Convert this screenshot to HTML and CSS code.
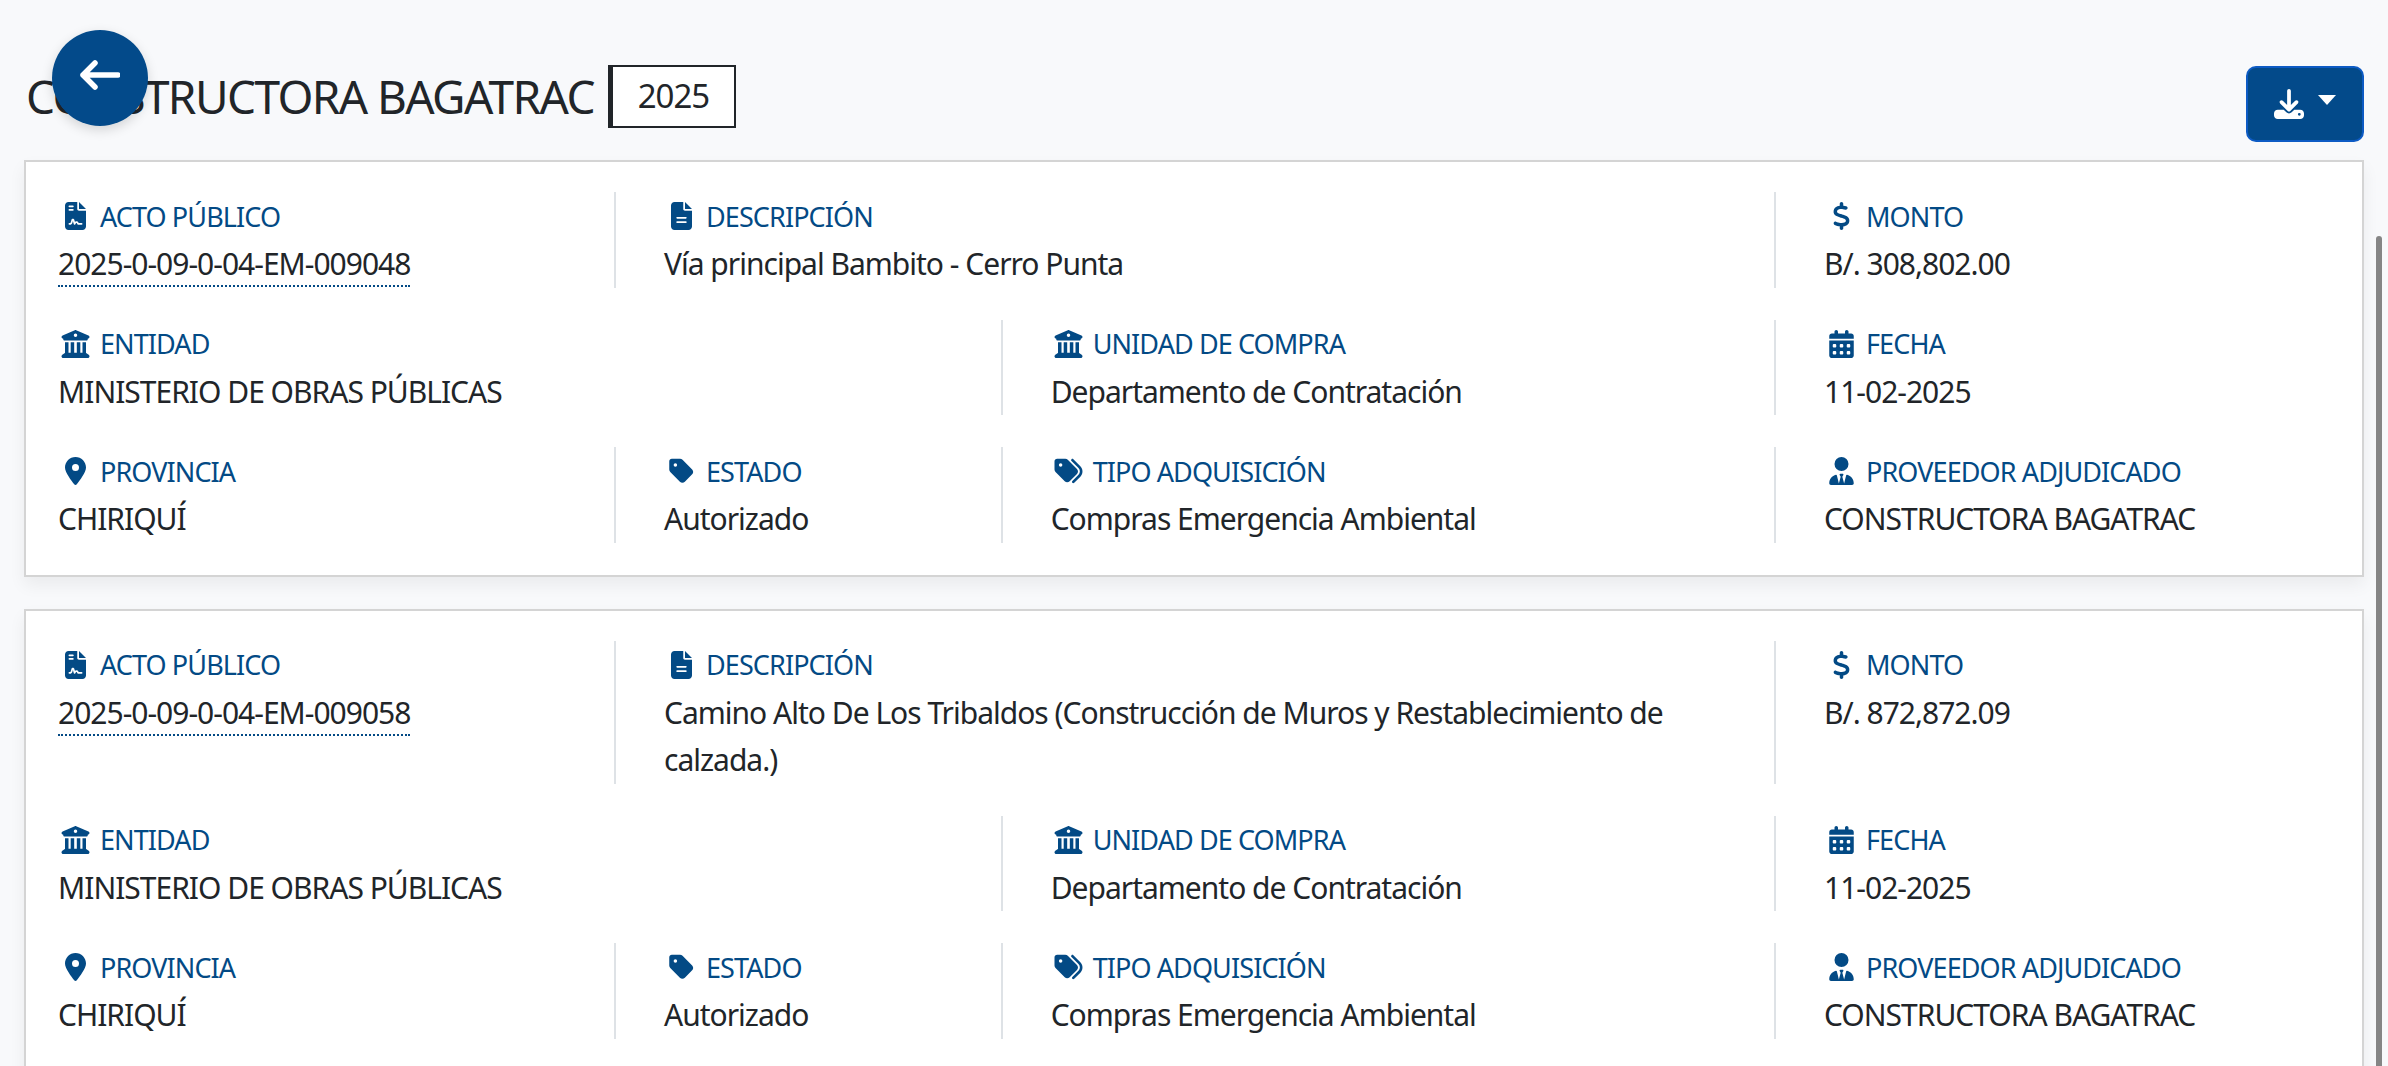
FILE: index.html
```html
<!DOCTYPE html>
<html lang="en">
<head>
    <meta charset="UTF-8">
    <meta name="viewport" content="width=device-width, initial-scale=1.0">
    <title>Constructora Bagatrac</title>
    <link rel="stylesheet" href="styles.css">
</head>
<body>
    <!-- Icon sprite -->
    <svg class="sprite" xmlns="http://www.w3.org/2000/svg">
        <symbol id="i-contract" viewBox="0 0 384 512"><path d="M64 0C28.7 0 0 28.7 0 64V448c0 35.3 28.7 64 64 64H320c35.3 0 64-28.7 64-64V160H256c-17.7 0-32-14.3-32-32V0H64zM256 0V128H384L256 0zM80 64h64c8.8 0 16 7.2 16 16s-7.2 16-16 16H80c-8.8 0-16-7.2-16-16s7.2-16 16-16zm0 64h64c8.8 0 16 7.2 16 16s-7.2 16-16 16H80c-8.8 0-16-7.2-16-16s7.2-16 16-16zm54.2 253.8c-6.1 20.3-24.8 34.2-46 34.2H80c-8.8 0-16-7.2-16-16s7.2-16 16-16h8.2c7.1 0 13.3-4.6 15.3-11.4l14.9-49.5c3.4-11.3 13.8-19.1 25.6-19.1s22.2 7.7 25.6 19.1l11.6 38.6c7.4-6.2 16.8-9.7 26.8-9.7c15.9 0 30.4 9 37.5 23.2l4.4 8.8H304c8.8 0 16 7.2 16 16s-7.2 16-16 16H240c-6.1 0-11.6-3.4-14.3-8.8l-8.8-17.7c-1.7-3.4-5.1-5.5-8.8-5.5s-7.2 2.1-8.8 5.5l-8.8 17.7c-2.9 5.9-9.2 9.4-15.7 8.8s-12.1-5.1-13.9-11.3L144 349l-9.8 32.8z"/></symbol>
        <symbol id="i-file" viewBox="0 0 384 512"><path d="M64 0C28.7 0 0 28.7 0 64V448c0 35.3 28.7 64 64 64H320c35.3 0 64-28.7 64-64V160H256c-17.7 0-32-14.3-32-32V0H64zM256 0V128H384L256 0zM112 272H272c8.8 0 16 7.2 16 16s-7.2 16-16 16H112c-8.8 0-16-7.2-16-16s7.2-16 16-16zm0 80H272c8.8 0 16 7.2 16 16s-7.2 16-16 16H112c-8.8 0-16-7.2-16-16s7.2-16 16-16z"/></symbol>
        <symbol id="i-dollar" viewBox="0 0 320 512"><path d="M160 0c17.7 0 32 14.3 32 32V67.7c1.6 .2 3.1 .4 4.7 .7c.4 .1 .7 .1 1.1 .2l48 8.8c17.4 3.2 28.9 19.9 25.7 37.2s-19.9 28.9-37.2 25.7l-47.5-8.7c-31.3-4.6-58.9-1.5-78.3 6.2s-27.2 18.3-29 28.1c-2 10.7-.5 16.7 1.2 20.4c1.8 3.9 5.5 8.3 12.8 13.2c16.3 10.7 41.3 17.7 73.7 26.3l2.9 .8c28.6 7.6 63.6 16.8 89.6 33.8c14.2 9.3 27.6 21.9 35.9 39.5c8.5 17.9 10.3 37.9 6.4 59.2c-6.9 38-33.1 63.4-65.6 76.7c-13.7 5.6-28.6 9.2-44.4 11V480c0 17.7-14.3 32-32 32s-32-14.3-32-32V445.1c-.4-.1-.9-.1-1.3-.2l-.2 0 0 0c-24.4-3.8-64.5-14.3-91.5-26.3c-16.1-7.2-23.4-26.1-16.2-42.2s26.1-23.4 42.2-16.2c20.9 9.3 55.3 18.5 75.2 21.6c31.9 4.7 58.2 2 76-5.3c16.9-6.9 24.6-16.9 26.8-28.9c1.9-10.6 .4-16.7-1.3-20.4c-1.9-4-5.6-8.4-13-13.3c-16.4-10.7-41.5-17.7-74-26.3l-2.8-.7 0 0C119.4 279.3 84.4 270 58.4 253c-14.2-9.3-27.5-22-35.8-39.6c-8.4-17.9-10.1-37.9-6.1-59.2C23.7 116 52.3 91.2 84.8 78.3c13.3-5.3 27.9-8.9 43.2-11V32c0-17.7 14.3-32 32-32z"/></symbol>
        <symbol id="i-bank" viewBox="0 0 512 512"><path d="M243.4 2.6l-224 96c-14 6-21.8 21-18.7 35.8S16.8 160 32 160v8c0 13.3 10.7 24 24 24H456c13.3 0 24-10.7 24-24v-8c15.2 0 28.3-10.7 31.3-25.6s-4.8-29.9-18.7-35.8l-224-96c-8-3.4-17.2-3.4-25.2 0zM128 224H64V420.3c-.6 .3-1.2 .7-1.8 1.1l-48 32c-11.7 7.8-17 22.4-12.9 35.9S17.9 512 32 512H480c14.1 0 26.5-9.2 30.6-22.7s-1.1-28.1-12.9-35.9l-48-32c-.6-.4-1.2-.7-1.8-1.1V224H384V416H344V224H280V416H232V224H168V416H128V224zM256 64a32 32 0 1 1 0 64 32 32 0 1 1 0-64z"/></symbol>
        <symbol id="i-calendar" viewBox="0 0 448 512"><path d="M128 0c17.7 0 32 14.3 32 32V64H288V32c0-17.7 14.3-32 32-32s32 14.3 32 32V64h48c26.5 0 48 21.5 48 48v48H0V112C0 85.5 21.5 64 48 64H96V32c0-17.7 14.3-32 32-32zM0 192H448V464c0 26.5-21.5 48-48 48H48c-26.5 0-48-21.5-48-48V192zm64 80v32c0 8.8 7.2 16 16 16h32c8.8 0 16-7.2 16-16V272c0-8.8-7.2-16-16-16H80c-8.8 0-16 7.2-16 16zm128 0v32c0 8.8 7.2 16 16 16h32c8.8 0 16-7.2 16-16V272c0-8.8-7.2-16-16-16H208c-8.8 0-16 7.2-16 16zm144-16c-8.8 0-16 7.2-16 16v32c0 8.8 7.2 16 16 16h32c8.8 0 16-7.2 16-16V272c0-8.8-7.2-16-16-16H336zM64 400v32c0 8.8 7.2 16 16 16h32c8.8 0 16-7.2 16-16V400c0-8.8-7.2-16-16-16H80c-8.8 0-16 7.2-16 16zm144-16c-8.8 0-16 7.2-16 16v32c0 8.8 7.2 16 16 16h32c8.8 0 16-7.2 16-16V400c0-8.8-7.2-16-16-16H208zm112 16v32c0 8.8 7.2 16 16 16h32c8.8 0 16-7.2 16-16V400c0-8.8-7.2-16-16-16H336c-8.8 0-16 7.2-16 16z"/></symbol>
        <symbol id="i-pin" viewBox="0 0 384 512"><path d="M215.7 499.2C267 435 384 279.4 384 192C384 86 298 0 192 0S0 86 0 192c0 87.4 117 243 168.3 307.2c12.3 15.3 35.1 15.3 47.4 0zM192 128a64 64 0 1 1 0 128 64 64 0 1 1 0-128z"/></symbol>
        <symbol id="i-tag" viewBox="0 0 448 512"><path d="M0 80V229.5c0 17 6.7 33.3 18.7 45.3l176 176c25 25 65.5 25 90.5 0L418.7 317.3c25-25 25-65.5 0-90.5l-176-176c-12-12-28.3-18.7-45.3-18.7H48C21.5 32 0 53.5 0 80zm112 32a32 32 0 1 1 0 64 32 32 0 1 1 0-64z"/></symbol>
        <symbol id="i-tags" viewBox="0 0 512 512"><path d="M345 39.1L472.8 168.4c52.4 53 52.4 138.2 0 191.2L360.8 472.9c-9.3 9.4-24.5 9.5-33.9 .2s-9.5-24.5-.2-33.9L438.6 325.9c33.9-34.3 33.9-89.4 0-123.7L310.9 72.9c-9.3-9.4-9.2-24.6 .2-33.9s24.6-9.2 33.9 .2zM0 229.5V80C0 53.5 21.5 32 48 32H197.5c17 0 33.3 6.7 45.3 18.7l168 168c25 25 25 65.5 0 90.5L277.3 442.7c-25 25-65.5 25-90.5 0l-168-168C6.7 262.7 0 246.5 0 229.5zM144 144a32 32 0 1 0 -64 0 32 32 0 1 0 64 0z"/></symbol>
        <symbol id="i-user" viewBox="0 0 448 512"><path d="M96 128a128 128 0 1 0 256 0A128 128 0 1 0 96 128zm94.5 200.2l18.6 31L175.8 483.1l-36-146.9c-2-8.1-9.8-13.4-17.9-11.3C51.9 342.4 0 405.8 0 481.3c0 17 13.8 30.7 30.7 30.7H162.5c0 0 0 0 .1 0H168 280h5.5c0 0 0 0 .1 0H417.3c17 0 30.7-13.8 30.7-30.7c0-75.5-51.9-138.9-121.9-156.4c-8.1-2-15.9 3.3-17.9 11.3l-36 146.9L238.9 359.2l18.6-31c6.4-10.7-1.3-24.2-13.7-24.2H224 204.3c-12.4 0-20.1 13.6-13.7 24.2z"/></symbol>
        <symbol id="i-download" viewBox="0 0 512 512"><path d="M288 32c0-17.7-14.3-32-32-32s-32 14.3-32 32V274.7l-73.4-73.4c-12.5-12.5-32.8-12.5-45.3 0s-12.5 32.8 0 45.3l128 128c12.5 12.5 32.8 12.5 45.3 0l128-128c12.5-12.5 12.5-32.8 0-45.3s-32.8-12.5-45.3 0L288 274.7V32zM64 352c-35.3 0-64 28.7-64 64v32c0 35.3 28.7 64 64 64H448c35.3 0 64-28.7 64-64V416c0-35.3-28.7-64-64-64H346.5l-45.3 45.3c-25 25-65.5 25-90.5 0L165.5 352H64zm368 56a24 24 0 1 1 0 48 24 24 0 1 1 0-48z"/></symbol>
    </svg>

    <button class="back-btn" aria-label="Volver">
        <svg width="40" height="30" viewBox="0 0 40 30"><path d="M38 15H3M15 3L3 15L15 27"/></svg>
    </button>

    <div class="scroll-thumb"></div>

    <main class="page">
        <header class="page-head">
            <div class="title-wrap">
                <h1 class="title">CONSTRUCTORA BAGATRAC</h1>
                <span class="year">2025</span>
            </div>
            <button class="export-btn" aria-label="Descargar">
                <svg class="export-icon"><use href="#i-download"/></svg>
                <span class="caret"></span>
            </button>
        </header>

        <section class="card">
            <div class="field span-3 first">
                <div class="label"><svg class="icon"><use href="#i-contract"/></svg>ACTO PÚBLICO</div>
                <div class="value"><a class="code">2025-0-09-0-04-EM-009048</a></div>
            </div>
            <div class="field span-6">
                <div class="label"><svg class="icon"><use href="#i-file"/></svg>DESCRIPCIÓN</div>
                <div class="value">Vía principal Bambito - Cerro Punta</div>
            </div>
            <div class="field span-3">
                <div class="label"><svg class="icon"><use href="#i-dollar"/></svg>MONTO</div>
                <div class="value">B/. 308,802.00</div>
            </div>
            <div class="field span-5 first">
                <div class="label"><svg class="icon"><use href="#i-bank"/></svg>ENTIDAD</div>
                <div class="value">MINISTERIO DE OBRAS PÚBLICAS</div>
            </div>
            <div class="field span-4">
                <div class="label"><svg class="icon"><use href="#i-bank"/></svg>UNIDAD DE COMPRA</div>
                <div class="value">Departamento de Contratación</div>
            </div>
            <div class="field span-3">
                <div class="label"><svg class="icon"><use href="#i-calendar"/></svg>FECHA</div>
                <div class="value">11-02-2025</div>
            </div>
            <div class="field span-3 first">
                <div class="label"><svg class="icon"><use href="#i-pin"/></svg>PROVINCIA</div>
                <div class="value">CHIRIQUÍ</div>
            </div>
            <div class="field span-2">
                <div class="label"><svg class="icon"><use href="#i-tag"/></svg>ESTADO</div>
                <div class="value">Autorizado</div>
            </div>
            <div class="field span-4">
                <div class="label"><svg class="icon"><use href="#i-tags"/></svg>TIPO ADQUISICIÓN</div>
                <div class="value">Compras Emergencia Ambiental</div>
            </div>
            <div class="field span-3">
                <div class="label"><svg class="icon"><use href="#i-user"/></svg>PROVEEDOR ADJUDICADO</div>
                <div class="value">CONSTRUCTORA BAGATRAC</div>
            </div>
        </section>

        <section class="card">
            <div class="field span-3 first">
                <div class="label"><svg class="icon"><use href="#i-contract"/></svg>ACTO PÚBLICO</div>
                <div class="value"><a class="code">2025-0-09-0-04-EM-009058</a></div>
            </div>
            <div class="field span-6">
                <div class="label"><svg class="icon"><use href="#i-file"/></svg>DESCRIPCIÓN</div>
                <div class="value">Camino Alto De Los Tribaldos (Construcción de Muros y Restablecimiento de calzada.)</div>
            </div>
            <div class="field span-3">
                <div class="label"><svg class="icon"><use href="#i-dollar"/></svg>MONTO</div>
                <div class="value">B/. 872,872.09</div>
            </div>
            <div class="field span-5 first">
                <div class="label"><svg class="icon"><use href="#i-bank"/></svg>ENTIDAD</div>
                <div class="value">MINISTERIO DE OBRAS PÚBLICAS</div>
            </div>
            <div class="field span-4">
                <div class="label"><svg class="icon"><use href="#i-bank"/></svg>UNIDAD DE COMPRA</div>
                <div class="value">Departamento de Contratación</div>
            </div>
            <div class="field span-3">
                <div class="label"><svg class="icon"><use href="#i-calendar"/></svg>FECHA</div>
                <div class="value">11-02-2025</div>
            </div>
            <div class="field span-3 first">
                <div class="label"><svg class="icon"><use href="#i-pin"/></svg>PROVINCIA</div>
                <div class="value">CHIRIQUÍ</div>
            </div>
            <div class="field span-2">
                <div class="label"><svg class="icon"><use href="#i-tag"/></svg>ESTADO</div>
                <div class="value">Autorizado</div>
            </div>
            <div class="field span-4">
                <div class="label"><svg class="icon"><use href="#i-tags"/></svg>TIPO ADQUISICIÓN</div>
                <div class="value">Compras Emergencia Ambiental</div>
            </div>
            <div class="field span-3">
                <div class="label"><svg class="icon"><use href="#i-user"/></svg>PROVEEDOR ADJUDICADO</div>
                <div class="value">CONSTRUCTORA BAGATRAC</div>
            </div>
        </section>
    </main>
</body>
</html>
```

FILE: styles.css
```css
html, body {
    height: 100%;
}
body {
    margin: 0;
    overflow: hidden;
    background-color: #f8f9fb;
    color: #212529;
    font-family: "Noto Sans", sans-serif;
}
.sprite {
    display: none;
}
.page {
    padding: 64px 24px 0;
}
.page-head {
    display: flex;
    justify-content: space-between;
    align-items: flex-start;
    margin-bottom: 18px;
}
.title-wrap {
    display: flex;
    align-items: center;
}
.title {
    margin: 0 14px 0 2px;
    font-size: 46px;
    font-weight: 400;
    line-height: 64px;
    letter-spacing: -1.6px;
}
.year {
    box-sizing: border-box;
    width: 128px;
    height: 63px;
    border: 2px solid #212529;
    border-left-width: 5px;
    background: #fff;
    font-size: 33px;
    line-height: 57px;
    text-align: center;
    letter-spacing: -1px;
}
.export-btn {
    box-sizing: border-box;
    display: flex;
    align-items: center;
    justify-content: center;
    gap: 14px;
    width: 118px;
    height: 76px;
    margin-top: 2px;
    padding: 0;
    border: 2px solid #0d5bc4;
    border-radius: 10px;
    background-color: #034a8a;
}
.export-icon {
    width: 30px;
    height: 30px;
    fill: #fff;
}
.caret {
    width: 0;
    height: 0;
    margin-top: -8px;
    border-top: 10px solid #fff;
    border-left: 9px solid transparent;
    border-right: 9px solid transparent;
}
.back-btn {
    position: fixed;
    top: 30px;
    left: 52px;
    display: flex;
    align-items: center;
    justify-content: center;
    width: 96px;
    height: 96px;
    padding: 0 0 6px;
    border: none;
    border-radius: 50%;
    background-color: #034a8a;
    box-shadow: 0 4px 12px rgba(0, 0, 0, 0.15);
}
.back-btn path {
    fill: none;
    stroke: #fff;
    stroke-width: 5.5;
    stroke-linecap: round;
    stroke-linejoin: round;
}
.scroll-thumb {
    position: fixed;
    top: 236px;
    bottom: 0;
    right: 6px;
    width: 6px;
    border-radius: 3px 3px 0 0;
    background-color: #858585;
}
.card {
    display: grid;
    grid-template-columns: repeat(12, 1fr);
    row-gap: 32px;
    margin-bottom: 32px;
    padding: 30px 8px 32px;
    border: 2px solid #d4d4d4;
    background-color: #fff;
    box-shadow: 0 8px 16px rgba(0, 0, 0, 0.06);
}
.field {
    padding-left: 48px;
    border-left: 2px solid #dee2e6;
}
.field.first {
    padding-left: 24px;
    border-left: none;
}
.span-2 { grid-column: span 2; }
.span-3 { grid-column: span 3; }
.span-4 { grid-column: span 4; }
.span-5 { grid-column: span 5; }
.span-6 { grid-column: span 6; }
.label {
    display: flex;
    align-items: center;
    height: 48px;
    color: #034a85;
    font-size: 27px;
    letter-spacing: -0.9px;
}
.icon {
    flex: none;
    width: 35px;
    height: 28px;
    margin-right: 7px;
    fill: #034a85;
}
.value {
    font-size: 30px;
    line-height: 47.5px;
    letter-spacing: -1px;
}
.code {
    display: inline-block;
    line-height: 42px;
    border-bottom: 2px dotted #034a85;
}
```
